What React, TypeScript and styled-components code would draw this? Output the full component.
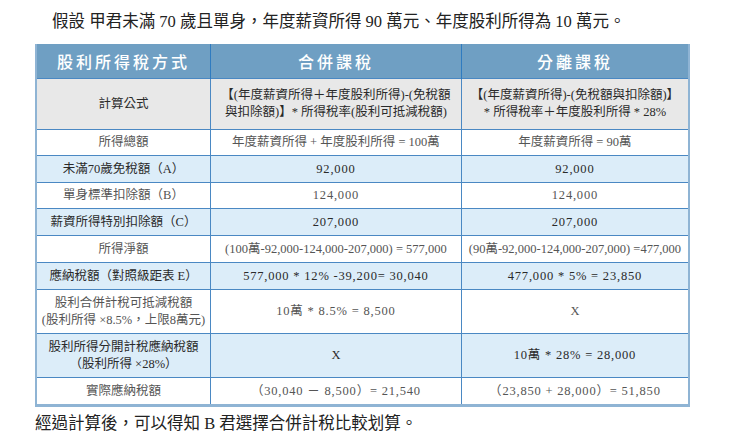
import React from "react";
import styled, { createGlobalStyle } from "styled-components";

const Global = createGlobalStyle`
  html, body { margin: 0; padding: 0; background: #fff; }
  body { font-family: "Liberation Serif", "Noto Sans CJK TC", serif; }
`;

const Page = styled.div`
  width: 731px;
  height: 446px;
  box-sizing: border-box;
  padding: 0 0 0 35px;
  display: flex;
  flex-direction: column;
`;

const Title = styled.p`
  margin: 0;
  height: 44px;
  box-sizing: border-box;
  padding: 12px 0 0 17px;
  font-size: 16.5px;
  line-height: 20px;
  color: #222;
  white-space: nowrap;
`;

const Footer = styled.p`
  margin: 0;
  padding-top: 7px;
  font-size: 16.5px;
  line-height: 20px;
  color: #222;
  white-space: nowrap;
`;

const Table = styled.table`
  width: 655px;
  border-collapse: collapse;
  table-layout: fixed;
  border-left: 2px solid #8fb4d4;
  border-right: 2px solid #8fb4d4;
  border-bottom: 3px solid #8fb4d4;
`;

const HeadCell = styled.th`
  background: #6f9fc3;
  color: #fff;
  font-family: "Noto Sans CJK TC", sans-serif;
  font-weight: 500;
  font-size: 16px;
  letter-spacing: 3px;
  height: 34px;
  padding: 0;
  text-align: center;
  border-left: 1px solid #2f7bc0;
  &:first-child { border-left: none; }
`;

const Row = styled.tr<{ $tone: "gray" | "blue" | "white"; $h: number }>`
  height: ${(p) => p.$h}px;
  background: ${(p) =>
    p.$tone === "gray" ? "#e8e8e8" : p.$tone === "blue" ? "#dcedf9" : "#ffffff"};
  color: ${(p) => (p.$tone === "white" ? "#555" : "#2a2a2a")};
`;

const Cell = styled.td`
  padding: 0 2px;
  text-align: center;
  vertical-align: middle;
  font-size: 12.5px;
  line-height: 17px;
  border-top: 1px solid #4a88c3;
  border-left: 1px solid #4a88c3;
  white-space: nowrap;
  &:first-child { border-left: none; }
`;

const Num = styled.span`
  letter-spacing: 0.8px;
`;

type RowData = {
  tone: "gray" | "blue" | "white";
  h: number;
  cells: React.ReactNode[];
};

const rows: RowData[] = [
  {
    tone: "gray",
    h: 51,
    cells: [
      "計算公式",
      <>【(年度薪資所得＋年度股利所得)-(免稅額<br />與扣除額)】* 所得稅率(股利可抵減稅額)</>,
      <>【(年度薪資所得)-(免稅額與扣除額)】<br />* 所得稅率＋年度股利所得 * 28%</>,
    ],
  },
  {
    tone: "white",
    h: 26,
    cells: ["所得總額", "年度薪資所得 + 年度股利所得 = 100萬", "年度薪資所得 = 90萬"],
  },
  {
    tone: "blue",
    h: 27,
    cells: ["未滿70歲免稅額（A）", <Num>92,000</Num>, <Num>92,000</Num>],
  },
  {
    tone: "white",
    h: 26,
    cells: ["單身標準扣除額（B）", <Num>124,000</Num>, <Num>124,000</Num>],
  },
  {
    tone: "blue",
    h: 27,
    cells: ["薪資所得特別扣除額（C）", <Num>207,000</Num>, <Num>207,000</Num>],
  },
  {
    tone: "white",
    h: 27,
    cells: [
      "所得淨額",
      "(100萬-92,000-124,000-207,000) = 577,000",
      "(90萬-92,000-124,000-207,000) =477,000",
    ],
  },
  {
    tone: "blue",
    h: 27,
    cells: [
      "應納稅額（對照級距表 E）",
      <Num>577,000 * 12% -39,200= 30,040</Num>,
      <Num>477,000 * 5% = 23,850</Num>,
    ],
  },
  {
    tone: "white",
    h: 44,
    cells: [
      <>股利合併計稅可抵減稅額<br />(股利所得 ×8.5%，上限8萬元)</>,
      <Num>10萬 * 8.5% = 8,500</Num>,
      "X",
    ],
  },
  {
    tone: "blue",
    h: 44,
    cells: [
      <>股利所得分開計稅應納稅額<br />（股利所得 ×28%）</>,
      "X",
      <Num>10萬 * 28% = 28,000</Num>,
    ],
  },
  {
    tone: "white",
    h: 28,
    cells: [
      "實際應納稅額",
      <Num>（30,040 － 8,500）= 21,540</Num>,
      <Num>（23,850 + 28,000）= 51,850</Num>,
    ],
  },
];

export default function App() {
  return (
    <>
      <Global />
      <Page>
        <Title>假設 甲君未滿 70 歲且單身，年度薪資所得 90 萬元、年度股利所得為 10 萬元。</Title>
        <Table>
          <colgroup>
            <col style={{ width: 174 }} />
            <col style={{ width: 250 }} />
            <col style={{ width: 227 }} />
          </colgroup>
          <thead>
            <tr>
              <HeadCell>股利所得稅方式</HeadCell>
              <HeadCell>合併課稅</HeadCell>
              <HeadCell>分離課稅</HeadCell>
            </tr>
          </thead>
          <tbody>
            {rows.map((r, i) => (
              <Row key={i} $tone={r.tone} $h={r.h}>
                {r.cells.map((c, j) => (
                  <Cell key={j}>{c}</Cell>
                ))}
              </Row>
            ))}
          </tbody>
        </Table>
        <Footer>經過計算後，可以得知 B 君選擇合併計稅比較划算。</Footer>
      </Page>
    </>
  );
}
